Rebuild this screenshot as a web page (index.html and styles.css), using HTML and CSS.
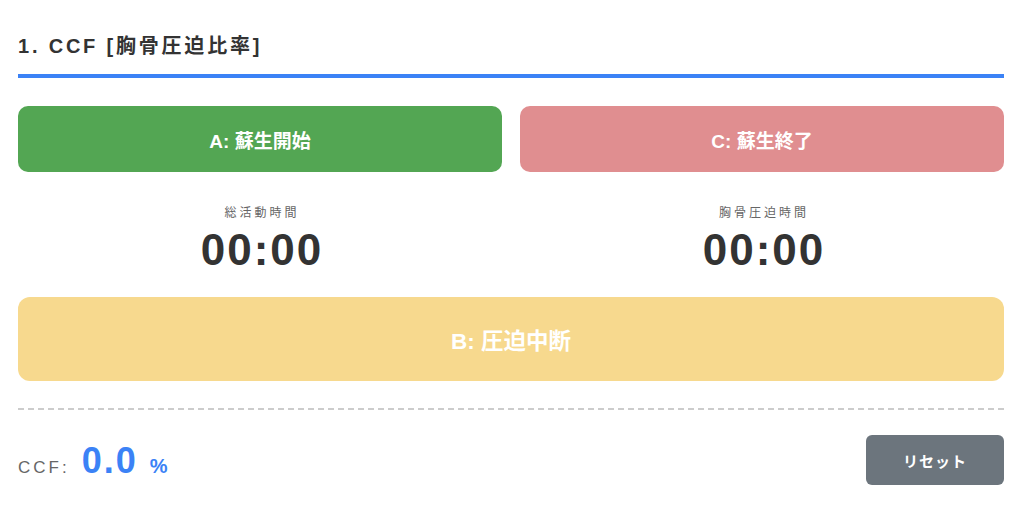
FILE: index.html
```html
<!DOCTYPE html>
<html lang="ja">
  <head>
    <meta charset="utf-8" />
    <meta name="viewport" content="width=device-width, initial-scale=1.0" />
    <link rel="stylesheet" href="styles.css">
  </head>
  <body>
    <div class="panel">
      <h2 class="panel-title">1. CCF [胸骨圧迫比率]</h2>

      <div class="btn-row">
        <button class="big-btn btn-start">A: 蘇生開始</button>
        <button class="big-btn btn-end">C: 蘇生終了</button>
      </div>

      <div class="timers">
        <div class="timer">
          <div class="timer-label">総活動時間</div>
          <div class="timer-value">00:00</div>
        </div>
        <div class="timer">
          <div class="timer-label">胸骨圧迫時間</div>
          <div class="timer-value">00:00</div>
        </div>
      </div>

      <button class="big-btn btn-pause">B: 圧迫中断</button>

      <div class="result-row">
        <div class="result">
          <span class="result-label">CCF:</span>
          <span class="result-value">0.0</span>
          <span class="result-unit">%</span>
        </div>
        <button class="reset-btn">リセット</button>
      </div>
    </div>
  </body>
</html>
```

FILE: styles.css
```css
* {
  margin: 0;
  padding: 0;
  box-sizing: border-box;
}

body {
  background: #ffffff;
  font-family: "Liberation Sans", "Noto Sans CJK JP", sans-serif;
  color: #333333;
}

.panel {
  padding: 0 20px 0 18px;
}

.panel-title {
  font-size: 20px;
  font-weight: 700;
  letter-spacing: 2.8px;
  color: #333333;
  padding-top: 32px;
  padding-bottom: 14px;
  line-height: 28px;
  border-bottom: 4px solid #3b82f6;
}

.btn-row {
  display: grid;
  grid-template-columns: 1fr 1fr;
  gap: 18px;
  margin-top: 28px;
}

.big-btn {
  border: none;
  border-radius: 10px;
  color: #ffffff;
  font-family: inherit;
  font-size: 19px;
  font-weight: 700;
  height: 66px;
  width: 100%;
}

.btn-start {
  background: #53a653;
}

.btn-end {
  background: #e08e90;
}

.timers {
  display: grid;
  grid-template-columns: 1fr 1fr;
  gap: 18px;
  padding-top: 33px;
  height: 125px;
}

.timer {
  display: flex;
  flex-direction: column;
  align-items: center;
  padding-left: 4px;
}

.timer-label {
  font-size: 12px;
  letter-spacing: 3px;
  color: #666666;
  line-height: 16px;
}

.timer-value {
  font-size: 44px;
  font-weight: 700;
  letter-spacing: 2px;
  color: #333333;
  line-height: 50px;
  margin-top: 4px;
}

.btn-pause {
  height: 84px;
  font-size: 22.5px;
  background: #f7d98e;
  border-radius: 12px;
}

.result-row {
  display: flex;
  justify-content: space-between;
  align-items: center;
  margin-top: 27px;
  padding-top: 25px;
  border-top: 2px dashed #cccccc;
}

.result {
  display: flex;
  align-items: baseline;
  gap: 12px;
  padding-top: 2px;
}

.result-label {
  font-size: 17px;
  letter-spacing: 3px;
  color: #666666;
}

.result-value {
  font-size: 36px;
  font-weight: 700;
  letter-spacing: 2px;
  color: #3b82f6;
}

.result-unit {
  font-size: 20px;
  font-weight: 700;
  color: #3b82f6;
}

.reset-btn {
  background: #6c757d;
  color: #ffffff;
  border: none;
  border-radius: 6px;
  width: 138px;
  height: 50px;
  font-family: inherit;
  font-size: 15px;
  font-weight: 600;
  letter-spacing: 1px;
}
```
